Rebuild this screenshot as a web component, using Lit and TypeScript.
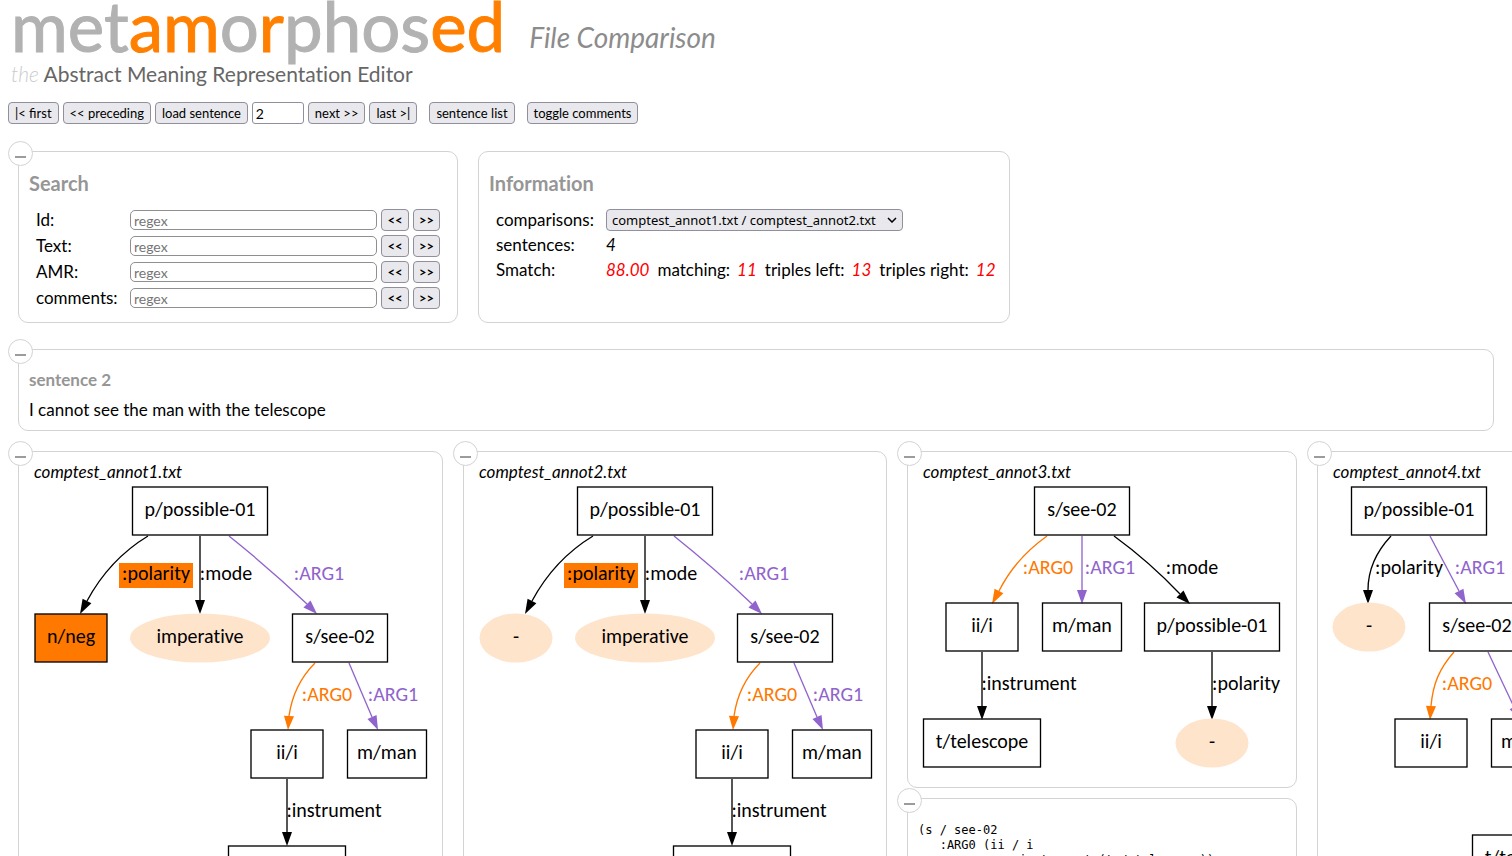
import { LitElement, html, svg, css } from "lit";
import { customElement, property, state } from "lit/decorators.js";

type Kind = "box" | "changed" | "literal";
type GraphNode = { text: string; x: number; y: number; w: number; kind?: Kind };
type Edge = { d: string; end: [number, number]; tip: [number, number]; tone?: string };
type Label = { text: string; x: number; y: number; tone?: string; marked?: boolean };
type Graph = { width: number; height: number; nodes: GraphNode[]; edges: Edge[]; labels: Label[] };

const wideGraph = (width: number, first: GraphNode): Graph => ({
  width,
  height: 424,
  nodes: [
    { text: "p/possible-01", x: 171, y: 29, w: 135 },
    first,
    { text: "imperative", x: 171, y: 156, w: 140, kind: "literal" },
    { text: "s/see-02", x: 311, y: 156, w: 95 },
    { text: "ii/i", x: 258, y: 272, w: 72 },
    { text: "m/man", x: 358, y: 272, w: 79 },
    { text: "t/telescope", x: 258, y: 388, w: 117 },
  ],
  edges: [
    { d: "M119,54 C91,71 72,93 58,119", end: [58, 119], tip: [51, 132] },
    { d: "M171,54 V118", end: [171, 118], tip: [171, 132] },
    { d: "M200,54 C225,74 255,100 278,122", end: [278, 122], tip: [288, 132], tone: "purple" },
    { d: "M286,181 C271,196 263,213 260,234", end: [260, 234], tip: [259, 248], tone: "orange" },
    { d: "M320,181 L343,235", end: [343, 235], tip: [349, 248], tone: "purple" },
    { d: "M258,297 V350", end: [258, 350], tip: [258, 364] },
  ],
  labels: [
    { text: ":polarity", x: 127, y: 98, marked: true },
    { text: ":mode", x: 197, y: 98 },
    { text: ":ARG1", x: 290, y: 98, tone: "purple" },
    { text: ":ARG0", x: 298, y: 219, tone: "orange" },
    { text: ":ARG1", x: 364, y: 219, tone: "purple" },
    { text: ":instrument", x: 305, y: 335 },
  ],
});

const GRAPHS: Graph[] = [
  wideGraph(403, { text: "n/neg", x: 42, y: 156, w: 72, kind: "changed" }),
  wideGraph(402, { text: "-", x: 42, y: 156, w: 73, kind: "literal" }),
  {
    width: 368,
    height: 295,
    nodes: [
      { text: "s/see-02", x: 164, y: 29, w: 95 },
      { text: "ii/i", x: 64, y: 145, w: 72 },
      { text: "m/man", x: 164, y: 145, w: 79 },
      { text: "p/possible-01", x: 294, y: 145, w: 135 },
      { text: "t/telescope", x: 64, y: 261, w: 117 },
      { text: "-", x: 294, y: 261, w: 73, kind: "literal" },
    ],
    edges: [
      { d: "M129,54 C108,69 92,87 81,109", end: [81, 109], tip: [74, 122], tone: "orange" },
      { d: "M164,54 V108", end: [164, 108], tip: [164, 122], tone: "purple" },
      { d: "M196,54 C218,70 242,91 262,112", end: [262, 112], tip: [272, 122] },
      { d: "M64,170 V224", end: [64, 224], tip: [64, 238] },
      { d: "M294,170 V224", end: [294, 224], tip: [294, 238] },
    ],
    labels: [
      { text: ":ARG0", x: 130, y: 92, tone: "orange" },
      { text: ":ARG1", x: 192, y: 92, tone: "purple" },
      { text: ":mode", x: 274, y: 92 },
      { text: ":instrument", x: 111, y: 208 },
      { text: ":polarity", x: 328, y: 208 },
    ],
  },
  {
    width: 300,
    height: 410,
    nodes: [
      { text: "p/possible-01", x: 91, y: 29, w: 135 },
      { text: "-", x: 41, y: 145, w: 73, kind: "literal" },
      { text: "s/see-02", x: 149, y: 145, w: 95 },
      { text: "ii/i", x: 103, y: 261, w: 72 },
      { text: "m/man", x: 203, y: 261, w: 79 },
      { text: "t/telescope", x: 203, y: 377, w: 117 },
    ],
    edges: [
      { d: "M63,54 C48,70 40,87 40,108", end: [40, 108], tip: [40, 122] },
      { d: "M102,54 L131,109", end: [131, 109], tip: [138, 122], tone: "purple" },
      { d: "M126,170 C111,187 105,202 103,224", end: [103, 224], tip: [102, 238], tone: "orange" },
      { d: "M160,170 L186,225", end: [186, 225], tip: [193, 238], tone: "purple" },
      { d: "M203,286 V340", end: [203, 340], tip: [203, 354] },
    ],
    labels: [
      { text: ":polarity", x: 81, y: 92 },
      { text: ":ARG1", x: 152, y: 92, tone: "purple" },
      { text: ":ARG0", x: 139, y: 208, tone: "orange" },
      { text: ":ARG1", x: 208, y: 208, tone: "purple" },
      { text: ":instrument", x: 250, y: 324 },
    ],
  },
];

const WITH_TELESCOPE = `(p / possible-01
   :mode imperative
   :ARG1 (s / see-02
             :ARG0 (ii / i)
             :ARG1 (m / man)))`;

const PENMAN = [
  WITH_TELESCOPE,
  WITH_TELESCOPE,
  `(s / see-02
   :ARG0 (ii / i
             :instrument (t / telescope))
   :ARG1 (m / man)
   :mode (p / possible-01
             :polarity -))`,
  WITH_TELESCOPE,
];

@customElement("amr-graph")
export class AmrGraph extends LitElement {
  @property({ attribute: false }) graph!: Graph;

  static styles = css`
    :host { display: block; }
    svg { display: block; }
    text { font-family: Carlito, Lato, sans-serif; font-size: 20px; font-variant-ligatures: none; text-anchor: middle; fill: #000; }
    .box { fill: none; stroke: #000; stroke-width: 1.33; }
    .changed { fill: #ff7800; stroke: #000; stroke-width: 1.33; }
    .literal { fill: #ffe4cc; }
    .mark { fill: #ff7800; }
    .line { fill: none; stroke: #000; stroke-width: 1.33; }
    .head { fill: #000; }
    .line.purple { stroke: #9063cd; }
    .line.orange { stroke: #ff7800; }
    .head.purple, text.purple { fill: #9063cd; }
    .head.orange, text.orange { fill: #ff7800; }
  `;

  private arrow(e: Edge) {
    const [bx, by] = e.end;
    const [tx, ty] = e.tip;
    const len = Math.hypot(tx - bx, ty - by);
    const nx = (-(ty - by) / len) * 5;
    const ny = ((tx - bx) / len) * 5;
    return `${tx},${ty} ${bx + nx},${by + ny} ${bx - nx},${by - ny}`;
  }

  render() {
    const g = this.graph;
    return html`<svg width=${g.width} height=${g.height} role="img" aria-label="AMR graph">
      ${g.edges.map(
        (e) => svg`<path class="line ${e.tone ?? ""}" d=${e.d}></path>
          <polygon class="head ${e.tone ?? ""}" points=${this.arrow(e)}></polygon>`
      )}
      ${g.nodes.map((n) =>
        n.kind === "literal"
          ? svg`<ellipse class="literal" cx=${n.x} cy=${n.y} rx=${n.w / 2} ry="24.5"></ellipse>
              <text x=${n.x} y=${n.y + 5}>${n.text}</text>`
          : svg`<rect class=${n.kind ?? "box"} x=${n.x - n.w / 2} y=${n.y - 24} width=${n.w} height="48"></rect>
              <text x=${n.x} y=${n.y + 5}>${n.text}</text>`
      )}
      ${g.labels.map(
        (l) => svg`${l.marked ? svg`<rect class="mark" x=${l.x - 37} y=${l.y - 17} width="74" height="25"></rect>` : ""}
          <text class=${l.tone ?? ""} x=${l.x} y=${l.y}>${l.text}</text>`
      )}
    </svg>`;
  }
}

@customElement("info-card")
export class InfoCard extends LitElement {
  static styles = css`
    :host { display: block; box-sizing: border-box; border: 1px solid #d3d3d3; border-radius: 10px; padding: 10px; }
  `;

  render() {
    return html`<slot></slot>`;
  }
}

@customElement("fold-card")
export class FoldCard extends LitElement {
  @state() private folded = false;

  static styles = css`
    :host { display: block; position: relative; box-sizing: border-box; min-height: 26px; border: 1px solid #d3d3d3; border-radius: 10px; padding: 10px; }
    .fold { position: absolute; left: -11px; top: -11px; width: 25px; height: 25px; padding: 0; border: 1px solid #d3d3d3; border-radius: 50%; background: #fff; cursor: pointer; }
    .fold svg { display: block; }
  `;

  render() {
    return html`<button class="fold" aria-label="Fold" @click=${() => (this.folded = !this.folded)}>
        <svg width="23" height="23" viewBox="0 0 23 23"><path d="M6 15h11" stroke="#666" stroke-width="1.3" /></svg>
      </button>
      ${this.folded ? "" : html`<slot></slot>`}`;
  }
}

@customElement("app-root")
export class AppRoot extends LitElement {
  static styles = css`
    :host { display: block; height: 100vh; overflow: auto; scrollbar-width: none; box-sizing: border-box; padding: 0 8px; background: #fff; color: #000; font-family: Lato, sans-serif; font-size: 17px; line-height: 20px; font-variant-ligatures: none; }
    header { display: flex; gap: 24px; align-items: flex-start; padding-left: 3px; height: 102px; white-space: nowrap; }
    .logo { margin-bottom: 12px; font-size: 69px; line-height: 52px; color: #b2b2b2; -webkit-text-stroke: 1px currentColor; }
    .logo b { font-weight: 400; color: #ff8000; }
    .tagline { font-size: 21px; line-height: 20px; color: #666; }
    .tagline i { color: #ccc; font-weight: 300; }
    h1 { margin: 0; padding-top: 19px; font-size: 28px; line-height: 36px; font-style: italic; font-weight: 400; color: #8c8c8c; }
    .toolbar { display: flex; gap: 12px; }
    .group { display: flex; gap: 4px; }
    button, input, select { box-sizing: border-box; height: 22px; margin: 0; font-family: inherit; font-size: 13px; color: #000; border: 1px solid #8f8f9d; border-radius: 4px; }
    button { padding: 0 6px; background: #e9e9ed; line-height: 18px; white-space: nowrap; }
    .number { width: 52px; padding: 0 3px; font-size: 14px; border-radius: 3px; background: #fff; }
    .panels { display: flex; gap: 20px; padding: 27px 10px 0; align-items: stretch; }
    .search { width: 440px; }
    .info { width: 532px; }
    h2 { margin: 10px 0 15px; font-size: 20px; line-height: 22px; font-weight: 700; color: #969696; }
    .fields { display: grid; grid-template-columns: 90px 1fr 28px 27px; gap: 4px; padding: 0 7px 3px; align-items: center; }
    .fields input { width: 100%; height: 20px; padding: 0 3px; font-size: 14px; border-color: #8f8f8f; border-radius: 5px; background: #fff; }
    .fields input::placeholder { color: #757575; }
    .fields button { padding: 0; font-weight: 700; }
    .facts { display: grid; grid-template-columns: 110px 1fr; row-gap: 3px; padding-left: 7px; line-height: 22px; align-items: center; }
    select { width: 297px; padding: 0 5px; appearance: none; font-family: "Noto Sans", sans-serif; background: #e9e9ed url("data:image/svg+xml,%3Csvg xmlns='http://www.w3.org/2000/svg' width='10' height='6'%3E%3Cpath d='M1 1l4 4 4-4' fill='none' stroke='black' stroke-width='1.5'/%3E%3C/svg%3E") no-repeat right 5px center; }
    .counts { display: flex; gap: 8px; white-space: nowrap; }
    .counts span { display: flex; gap: 7px; }
    .red { color: #f00; }
    .sentence { margin: 26px 10px 0; }
    .sentence h3 { margin: 10px 0; font-size: 17px; line-height: 20px; font-weight: 700; color: #969696; }
    .sentence p { margin: 0; }
    .graphs { display: flex; gap: 20px; align-items: flex-start; padding: 20px 10px; }
    .column { display: grid; gap: 10px; flex: none; }
    .file { display: block; font-style: italic; padding-left: 5px; }
    pre { margin: 14px 0 10px; font-family: "DejaVu Sans Mono", monospace; font-size: 12px; line-height: 15px; }
  `;

  private searchRow(id: string, label: string) {
    return html`<label for=${id}>${label}</label>
      <input id=${id} type="text" placeholder="regex" />
      <button>&lt;&lt;</button>
      <button>&gt;&gt;</button>`;
  }

  render() {
    return html`
      <header>
        <div>
          <div class="logo">met<b>am</b>o<b>r</b>phos<b>ed</b></div>
          <div class="tagline"><i>the</i> Abstract Meaning Representation Editor</div>
        </div>
        <h1>File Comparison</h1>
      </header>

      <div class="toolbar">
        <div class="group">
          <button>|&lt; first</button>
          <button>&lt;&lt; preceding</button>
          <button>load sentence</button>
          <input class="number" type="text" aria-label="sentence number" .value=${"2"} />
          <button>next &gt;&gt;</button>
          <button>last &gt;|</button>
        </div>
        <button>sentence list</button>
        <button>toggle comments</button>
      </div>

      <div class="panels">
        <fold-card class="search">
          <h2>Search</h2>
          <div class="fields">
            ${this.searchRow("id", "Id:")} ${this.searchRow("text", "Text:")}
            ${this.searchRow("amr", "AMR:")} ${this.searchRow("comments", "comments:")}
          </div>
        </fold-card>
        <info-card class="info">
          <h2>Information</h2>
          <div class="facts">
            <label for="comparisons">comparisons:</label>
            <select id="comparisons">
              <option>comptest_annot1.txt / comptest_annot2.txt</option>
            </select>
            <span>sentences:</span><i>4</i>
            <span>Smatch:</span>
            <div class="counts">
              <i class="red">88.00</i>
              <span>matching: <i class="red">11</i></span>
              <span>triples left: <i class="red">13</i></span>
              <span>triples right: <i class="red">12</i></span>
            </div>
          </div>
        </info-card>
      </div>

      <fold-card class="sentence">
        <h3>sentence 2</h3>
        <p>I cannot see the man with the telescope</p>
      </fold-card>

      <div class="graphs">
        ${GRAPHS.map(
          (graph, i) => html`<div class="column">
            <fold-card>
              <span class="file">comptest_annot${i + 1}.txt</span>
              <amr-graph .graph=${graph}></amr-graph>
            </fold-card>
            <fold-card><pre>${PENMAN[i]}</pre></fold-card>
          </div>`
        )}
      </div>
    `;
  }
}
